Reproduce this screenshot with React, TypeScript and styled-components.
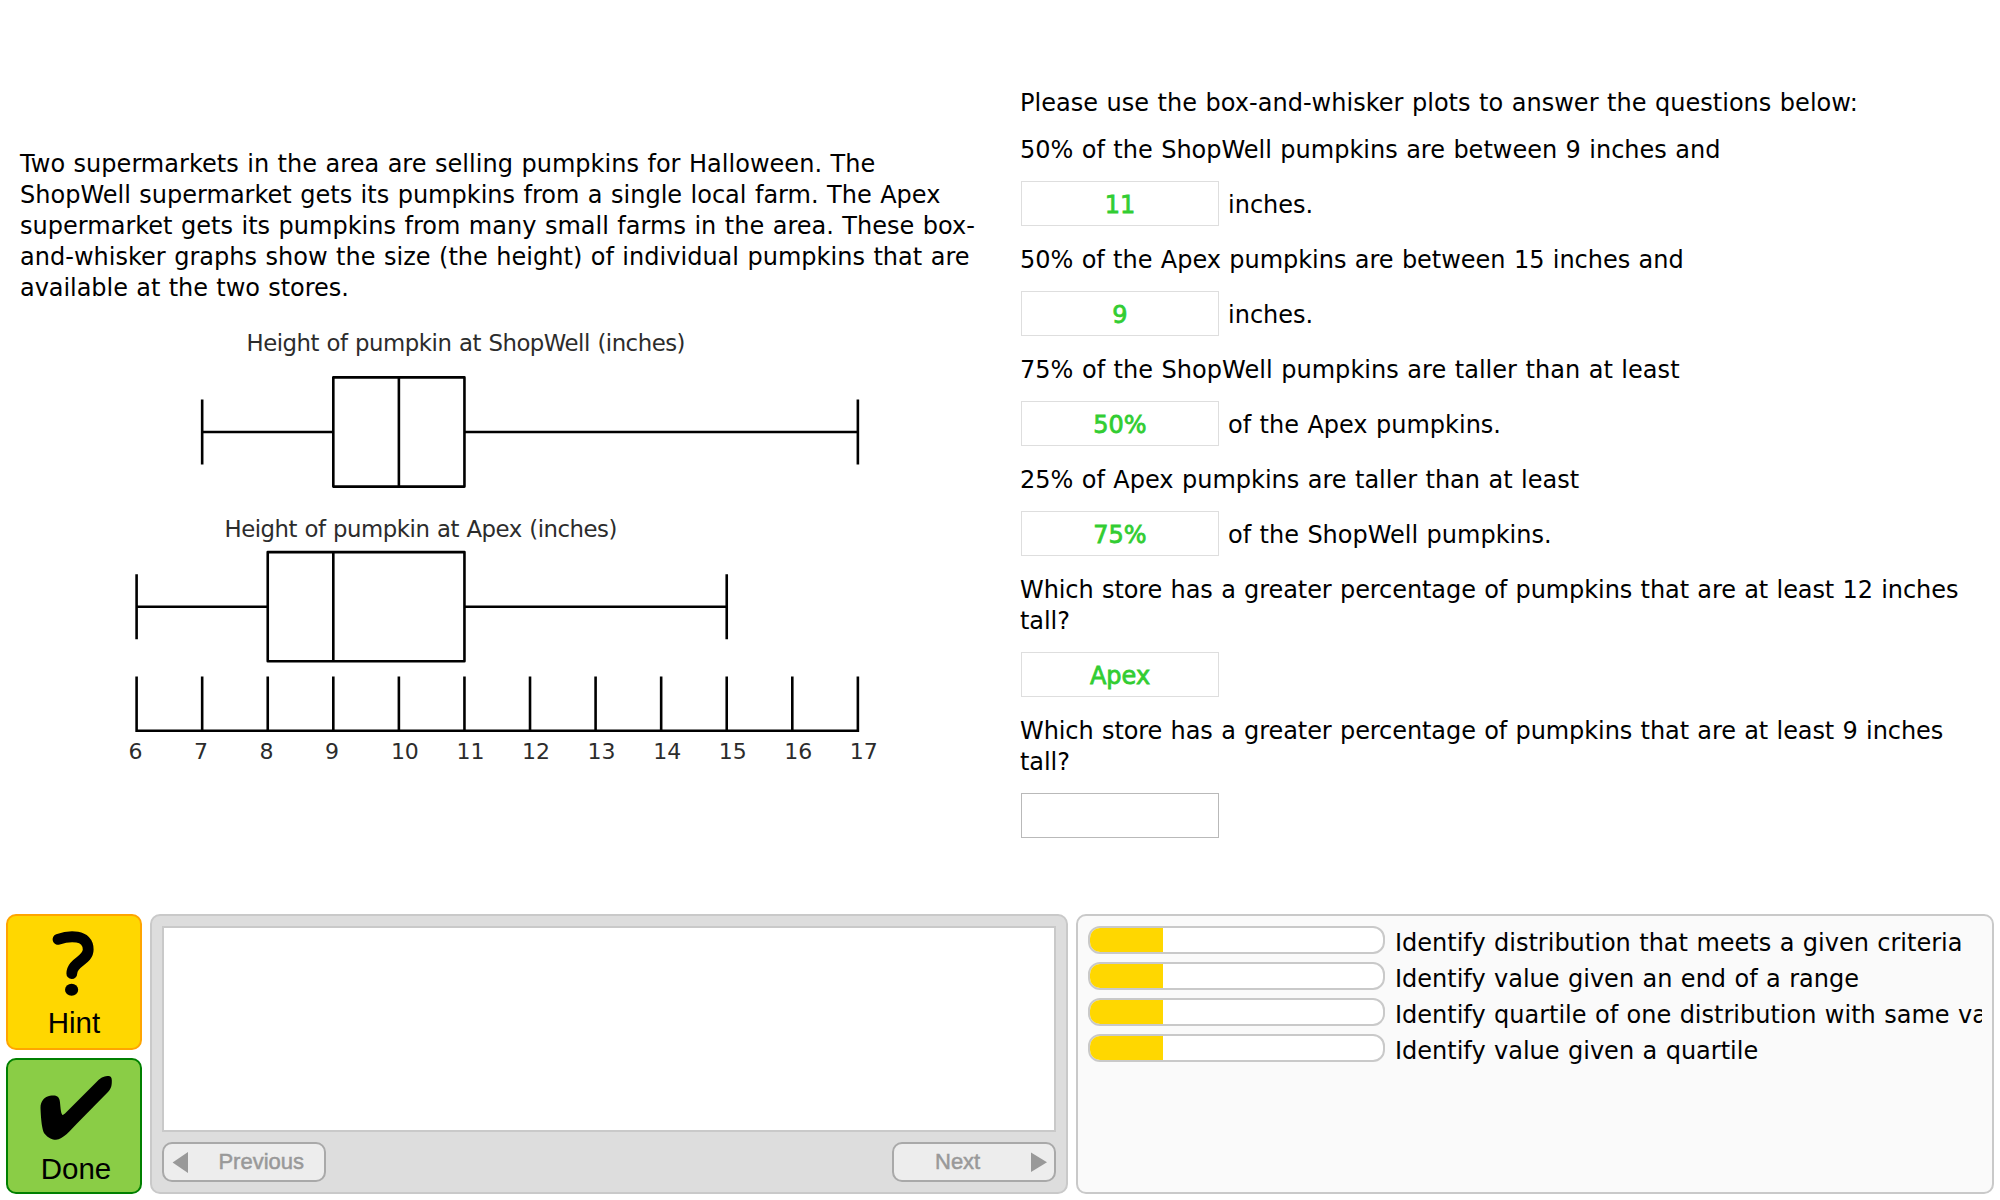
import React from "react";
import styled, { createGlobalStyle } from "styled-components";

const GlobalStyle = createGlobalStyle`
  * { box-sizing: border-box; }
  body {
    margin: 0;
    background: #fff;
    color: #000;
    font-family: Verdana, "DejaVu Sans", sans-serif;
    font-size: 24px;
    line-height: 31px;
    word-spacing: 0.8px;
  }
`;

const Page = styled.div`
  width: 2000px;
  height: 1200px;
  display: flex;
  flex-direction: column;
  overflow: hidden;
`;

const Problem = styled.main`
  display: flex;
  height: 914px;
`;

const Scenario = styled.section`
  width: 1000px;
  padding: 149px 0 0 20px;
`;

const Story = styled.p`
  margin: 0;
`;

const StoryLine = styled.span<{ $spacing?: number }>`
  display: block;
  white-space: nowrap;
  letter-spacing: ${(p) => p.$spacing ?? 0}px;
`;

const Chart = styled.svg`
  display: block;
  width: 880px;
  height: 480px;
  fill: none;
  stroke: #000;
  stroke-width: 2.6;

  text {
    fill: #2c2c2c;
    stroke: none;
  }
`;

const ChartTitle = styled.text`
  font-size: 22.8px;
  letter-spacing: -0.48px;
`;

const TickLabel = styled.text`
  font-size: 22px;
`;

const Questions = styled.section`
  flex: 1;
  padding: 88px 20px 0 20px;
`;

const Intro = styled.p`
  margin: 0 0 16px;
  letter-spacing: 0.03px;
`;

const Question = styled.div`
  margin-bottom: 19px;
`;

const Prompt = styled.p<{ $spacing?: number }>`
  margin: 0 0 15px;
  white-space: pre-line;
  letter-spacing: ${(p) => p.$spacing ?? 0}px;
`;

const AnswerRow = styled.div`
  display: flex;
  align-items: center;
  height: 45px;
  padding-left: 1px;
`;

const Answer = styled.div<{ $open?: boolean }>`
  width: 198px;
  height: 45px;
  padding-top: 8px;
  border: 1px solid ${(p) => (p.$open ? "#b9b9b9" : "#dedede")};
  color: #32cd32;
  text-align: center;
  -webkit-text-stroke: 0.8px #32cd32;
`;

const Unit = styled.span`
  padding-top: 3px;
  margin-left: 9px;
`;

const Footer = styled.footer`
  display: flex;
  height: 280px;
  padding-left: 6px;
  gap: 8px;
`;

const Actions = styled.div`
  display: flex;
  flex-direction: column;
  gap: 8px;
`;

const ActionButton = styled.button<{ $bg: string; $edge: string }>`
  display: flex;
  flex-direction: column;
  align-items: center;
  width: 136px;
  height: 136px;
  padding: 0;
  border: 2px solid ${(p) => p.$edge};
  border-radius: 10px;
  background: ${(p) => p.$bg};
  color: #000;
`;

const ActionIcon = styled.svg<{ $h: number }>`
  flex: none;
  width: 132px;
  height: ${(p) => p.$h}px;
`;

const ActionLabel = styled.span<{ $shift?: number }>`
  padding-left: ${(p) => p.$shift ?? 0}px;
  font: 29.5px/34px "Liberation Sans", Arial, sans-serif;
`;

const HintPanel = styled.section`
  display: flex;
  flex-direction: column;
  justify-content: space-between;
  width: 918px;
  padding: 10px;
  border: 2px solid #c9c9c9;
  border-radius: 10px;
  background: #ddd;
`;

const HintText = styled.div`
  height: 206px;
  border: 2px solid #c9c9c9;
  background: #fff;
`;

const HintNav = styled.div`
  display: flex;
  justify-content: space-between;
`;

const NavButton = styled.button<{ $pad: string }>`
  display: flex;
  align-items: center;
  justify-content: space-between;
  width: 164px;
  height: 40px;
  padding: ${(p) => p.$pad};
  border: 2px solid #a9a9a9;
  border-radius: 10px;
  background: #ededed;
  color: #999;
  font: 22px/36px "Liberation Sans", Arial, sans-serif;
  -webkit-text-stroke: 0.5px #999;
`;

const Arrow = styled.svg`
  width: 16px;
  height: 21px;
  fill: #999;
`;

const Skills = styled.section`
  display: flex;
  flex-direction: column;
  gap: 8px;
  width: 918px;
  padding: 10px;
  border: 2px solid #c9c9c9;
  border-radius: 10px;
  background: #fafafa;
`;

const Skill = styled.div`
  display: flex;
  gap: 10px;
  height: 28px;
`;

const Meter = styled.div`
  flex: none;
  width: 297px;
  height: 28px;
  overflow: hidden;
  border: 2px solid #c9c9c9;
  border-radius: 12px;
  background: #fff;
`;

const MeterFill = styled.div`
  height: 100%;
  background: #ffd700;
`;

const SkillName = styled.span`
  min-width: 0;
  flex: 1;
  padding-top: 2px;
  height: 35px;
  overflow: hidden;
  white-space: nowrap;
`;

const AXIS_LEFT = 136.6;
const UNIT = 65.57;
const at = (v: number) => AXIS_LEFT + (v - 6) * UNIT;

function BoxPlot(props: { y: number; min: number; q1: number; median: number; q3: number; max: number }) {
  const { y, min, q1, median, q3, max } = props;
  return (
    <g>
      <path d={`M${at(min)} ${y - 32.5}v65M${at(max)} ${y - 32.5}v65`} />
      <path d={`M${at(min)} ${y}H${at(q1)}M${at(q3)} ${y}H${at(max)}`} />
      <rect x={at(q1)} y={y - 54.6} width={at(q3) - at(q1)} height={109.2} strokeLinejoin="round" />
      <path d={`M${at(median)} ${y - 54.6}v109.2`} />
    </g>
  );
}

const ticks = [6, 7, 8, 9, 10, 11, 12, 13, 14, 15, 16, 17];

const story = [
  { text: "Two supermarkets in the area are selling pumpkins for Halloween. The", spacing: 0.03 },
  { text: "ShopWell supermarket gets its pumpkins from a single local farm. The Apex", spacing: 0.01 },
  { text: "supermarket gets its pumpkins from many small farms in the area. These box-", spacing: 0.02 },
  { text: "and-whisker graphs show the size (the height) of individual pumpkins that are", spacing: 0.02 },
  { text: "available at the two stores.", spacing: -0.05 },
];

const questions = [
  { prompt: "50% of the ShopWell pumpkins are between 9 inches and", answer: "11", unit: "inches." },
  { prompt: "50% of the Apex pumpkins are between 15 inches and", answer: "9", unit: "inches.", spacing: -0.03 },
  {
    prompt: "75% of the ShopWell pumpkins are taller than at least",
    answer: "50%",
    unit: "of the Apex pumpkins.",
    spacing: 0.04,
  },
  { prompt: "25% of Apex pumpkins are taller than at least", answer: "75%", unit: "of the ShopWell pumpkins." },
  {
    prompt: "Which store has a greater percentage of pumpkins that are at least 12 inches\ntall?",
    answer: "Apex",
    unit: "",
    spacing: -0.08,
  },
  {
    prompt: "Which store has a greater percentage of pumpkins that are at least 9 inches\ntall?",
    answer: "",
    unit: "",
    spacing: -0.08,
  },
];

const skills = [
  { name: "Identify distribution that meets a given criteria", level: 25 },
  { name: "Identify value given an end of a range", level: 25 },
  { name: "Identify quartile of one distribution with same value", level: 25 },
  { name: "Identify value given a quartile", level: 25 },
];

export default function App() {
  return (
    <Page>
      <GlobalStyle />
      <Problem>
        <Scenario>
          <Story>
            {story.map((l) => (
              <StoryLine key={l.text} $spacing={l.spacing}>{l.text}</StoryLine>
            ))}
          </Story>
          <Chart viewBox="20 304 880 480">
            <ChartTitle x="246.5" y="351">Height of pumpkin at ShopWell (inches)</ChartTitle>
            <BoxPlot y={432} min={7} q1={9} median={10} q3={11} max={17} />
            <ChartTitle x="224.5" y="537">Height of pumpkin at Apex (inches)</ChartTitle>
            <BoxPlot y={606.7} min={6} q1={8} median={9} q3={11} max={15} />
            <path d={`M${at(6)} 730.8H${at(17)}`} />
            {ticks.map((t) => (
              <g key={t}>
                <path d={`M${at(t)} 676.5V732`} />
                <TickLabel x={at(t) + (t < 10 ? -1.2 : 6)} y="759.3" textAnchor="middle">{t}</TickLabel>
              </g>
            ))}
          </Chart>
        </Scenario>
        <Questions>
          <Intro>Please use the box-and-whisker plots to answer the questions below:</Intro>
          {questions.map((q) => (
            <Question key={q.prompt}>
              <Prompt $spacing={q.spacing}>{q.prompt}</Prompt>
              <AnswerRow>
                <Answer $open={!q.answer}>{q.answer}</Answer>
                {q.unit && <Unit>{q.unit}</Unit>}
              </AnswerRow>
            </Question>
          ))}
        </Questions>
      </Problem>
      <Footer>
        <Actions>
          <ActionButton $bg="#ffd700" $edge="#ffa500">
            <ActionIcon $h={90} viewBox="8 916 132 90">
              <path
                d="M58 939.4C69 935.500 88.200 934 88.200 949.500C88.200 961 72 961.500 71.800 973.600"
                fill="none"
                stroke="#000"
                strokeWidth="10.8"
                strokeLinecap="round"
              />
              <ellipse cx="71.6" cy="989.8" rx="6.6" ry="6" />
            </ActionIcon>
            <ActionLabel>Hint</ActionLabel>
          </ActionButton>
          <ActionButton $bg="#8acd46" $edge="#008000">
            <ActionIcon $h={92} viewBox="8 1060 132 92">
              <path d="M40.5 1108C40.3 1101 45 1096.5 50 1095.8C56 1095 59 1096 59.8 1101C60.5 1106 60.5 1112 62.2 1114.8Q63 1115.4 65 1113.5L97 1081.5C102 1076.5 105 1076 108.5 1076Q111.6 1076 111.8 1080C112 1086 111 1089 107.5 1092.5L77 1123.5C70 1130.5 63 1139.5 56 1139.8C51 1139.8 46 1136.5 43.5 1132C41.5 1126 40.8 1116 40.5 1108Z" />
            </ActionIcon>
            <ActionLabel $shift={4}>Done</ActionLabel>
          </ActionButton>
        </Actions>
        <HintPanel>
          <HintText />
          <HintNav>
            <NavButton $pad="0 20px 0 8px">
              <Arrow viewBox="0 0 16 21"><path d="M0.6 10.5L16 0V21Z" /></Arrow>
              Previous
            </NavButton>
            <NavButton $pad="0 7px 0 41px">
              Next
              <Arrow viewBox="0 0 16 21"><path d="M0 0.5L16 10.3L0 20Z" /></Arrow>
            </NavButton>
          </HintNav>
        </HintPanel>
        <Skills>
          {skills.map((s) => (
            <Skill key={s.name}>
              <Meter><MeterFill style={{ width: `${s.level}%` }} /></Meter>
              <SkillName>{s.name}</SkillName>
            </Skill>
          ))}
        </Skills>
      </Footer>
    </Page>
  );
}
